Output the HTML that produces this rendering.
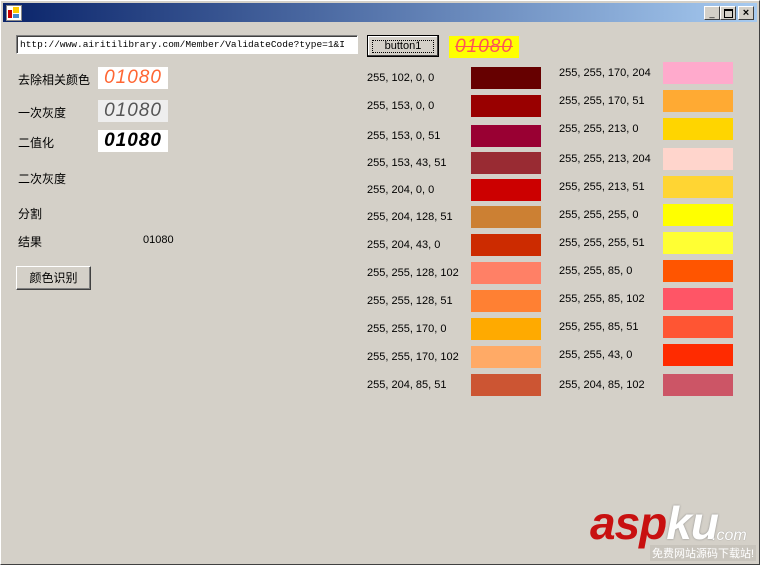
<!DOCTYPE html><html><head><meta charset="utf-8"><style>
body{margin:0;width:760px;height:565px;background:#d4d0c8;font-family:"Liberation Sans","Noto Sans CJK SC",sans-serif;font-size:11px;position:relative;overflow:hidden}
.a{position:absolute}
.t{position:absolute;font-size:11px;color:#000;white-space:nowrap}
.s{position:absolute;width:70px;height:22px}
.cap{font-family:"Liberation Sans",sans-serif;font-style:italic;font-size:19px;letter-spacing:1px}
</style></head><body>
<div class="a" style="left:0;top:0;width:758px;height:563px;border:1px solid #fff;border-right-color:#404040;border-bottom-color:#404040"></div>
<div class="a" style="left:3px;top:3px;width:754px;height:19px;background:linear-gradient(90deg,#0a246a,#a6caf0)"></div>
<div class="a" style="left:6px;top:5px;width:14px;height:14px;background:#fff;border:1px solid #888"><div class="a" style="left:1px;top:4px;width:4px;height:8px;background:#c00"></div><div class="a" style="left:6px;top:1px;width:6px;height:6px;background:#fc0"></div><div class="a" style="left:6px;top:8px;width:6px;height:4px;background:#48c"></div></div>
<div class="a" style="left:704px;top:6px;width:14px;height:12px;background:#d4d0c8;border:1px solid;border-color:#fff #404040 #404040 #fff;font-size:9px;text-align:center;line-height:12px">_</div>
<div class="a" style="left:720px;top:6px;width:14px;height:12px;background:#d4d0c8;border:1px solid;border-color:#fff #404040 #404040 #fff"><div class="a" style="left:3px;top:2px;width:7px;height:6px;border:1px solid #000;border-top-width:2px"></div></div>
<div class="a" style="left:738px;top:6px;width:14px;height:12px;background:#d4d0c8;border:1px solid;border-color:#fff #404040 #404040 #fff;font-size:11px;text-align:center;line-height:12px;font-weight:bold">×</div>
<div class="a" style="left:16px;top:35px;width:340px;height:17px;background:#fff;border:1px solid;border-color:#808080 #fff #fff #808080;box-shadow:inset 1px 1px 0 #404040;overflow:hidden"><span style="font-family:'Liberation Mono',monospace;font-size:9.5px;position:absolute;left:3px;top:3px;white-space:nowrap">http://www.airitilibrary.com/Member/ValidateCode?type=1&amp;I</span></div>
<div class="a" style="left:367px;top:35px;width:70px;height:20px;background:#d4d0c8;border:1px solid #000;box-shadow:inset -1px -1px 0 #404040,inset 1px 1px 0 #fff;text-align:center;line-height:20px;font-size:11px">button1<div class="a" style="left:4px;top:4px;width:60px;height:11px;border:1px dotted #000"></div></div>
<div class="a cap" style="left:449px;top:36px;width:70px;height:22px;background:#ff0;color:#f55;line-height:22px;text-decoration:line-through;text-align:center">01080</div>
<div class="t" style="left:18px;top:71px;font-size:12px">去除相关颜色</div>
<div class="a cap" style="left:98px;top:67px;width:70px;height:22px;background:#fff;color:#f63;line-height:22px;text-align:center">01080</div>
<div class="t" style="left:18px;top:104px;font-size:12px">一次灰度</div>
<div class="a cap" style="left:98px;top:100px;width:70px;height:22px;background:#eee;color:#555;line-height:22px;text-align:center">01080</div>
<div class="t" style="left:18px;top:134px;font-size:12px">二值化</div>
<div class="a cap" style="left:98px;top:130px;width:70px;height:22px;background:#fff;color:#000;line-height:22px;text-align:center;font-weight:bold">01080</div>
<div class="t" style="left:18px;top:170px;font-size:12px">二次灰度</div>
<div class="t" style="left:18px;top:205px;font-size:12px">分割</div>
<div class="t" style="left:18px;top:233px;font-size:12px">结果</div>
<div class="t" style="left:143px;top:234px">01080</div>
<div class="a" style="left:16px;top:266px;width:73px;height:22px;background:#d4d0c8;border:1px solid;border-color:#fff #404040 #404040 #fff;box-shadow:inset -1px -1px 0 #808080;text-align:center;line-height:22px;font-size:12px">颜色识别</div>

<div class="t" style="left:367px;top:72px">255, 102, 0, 0</div><div class="s" style="left:471px;top:67px;background:#660000"></div>
<div class="t" style="left:367px;top:100px">255, 153, 0, 0</div><div class="s" style="left:471px;top:95px;background:#990000"></div>
<div class="t" style="left:367px;top:130px">255, 153, 0, 51</div><div class="s" style="left:471px;top:125px;background:#990033"></div>
<div class="t" style="left:367px;top:157px">255, 153, 43, 51</div><div class="s" style="left:471px;top:152px;background:#992b33"></div>
<div class="t" style="left:367px;top:184px">255, 204, 0, 0</div><div class="s" style="left:471px;top:179px;background:#cc0000"></div>
<div class="t" style="left:367px;top:211px">255, 204, 128, 51</div><div class="s" style="left:471px;top:206px;background:#cc8033"></div>
<div class="t" style="left:367px;top:239px">255, 204, 43, 0</div><div class="s" style="left:471px;top:234px;background:#cc2b00"></div>
<div class="t" style="left:367px;top:267px">255, 255, 128, 102</div><div class="s" style="left:471px;top:262px;background:#ff8066"></div>
<div class="t" style="left:367px;top:295px">255, 255, 128, 51</div><div class="s" style="left:471px;top:290px;background:#ff8033"></div>
<div class="t" style="left:367px;top:323px">255, 255, 170, 0</div><div class="s" style="left:471px;top:318px;background:#ffaa00"></div>
<div class="t" style="left:367px;top:351px">255, 255, 170, 102</div><div class="s" style="left:471px;top:346px;background:#ffaa66"></div>
<div class="t" style="left:367px;top:379px">255, 204, 85, 51</div><div class="s" style="left:471px;top:374px;background:#cc5533"></div>

<div class="t" style="left:559px;top:67px">255, 255, 170, 204</div><div class="s" style="left:663px;top:62px;background:#ffaacc"></div>
<div class="t" style="left:559px;top:95px">255, 255, 170, 51</div><div class="s" style="left:663px;top:90px;background:#ffaa33"></div>
<div class="t" style="left:559px;top:123px">255, 255, 213, 0</div><div class="s" style="left:663px;top:118px;background:#ffd500"></div>
<div class="t" style="left:559px;top:153px">255, 255, 213, 204</div><div class="s" style="left:663px;top:148px;background:#ffd5cc"></div>
<div class="t" style="left:559px;top:181px">255, 255, 213, 51</div><div class="s" style="left:663px;top:176px;background:#ffd533"></div>
<div class="t" style="left:559px;top:209px">255, 255, 255, 0</div><div class="s" style="left:663px;top:204px;background:#ffff00"></div>
<div class="t" style="left:559px;top:237px">255, 255, 255, 51</div><div class="s" style="left:663px;top:232px;background:#ffff33"></div>
<div class="t" style="left:559px;top:265px">255, 255, 85, 0</div><div class="s" style="left:663px;top:260px;background:#ff5500"></div>
<div class="t" style="left:559px;top:293px">255, 255, 85, 102</div><div class="s" style="left:663px;top:288px;background:#ff5566"></div>
<div class="t" style="left:559px;top:321px">255, 255, 85, 51</div><div class="s" style="left:663px;top:316px;background:#ff5533"></div>
<div class="t" style="left:559px;top:349px">255, 255, 43, 0</div><div class="s" style="left:663px;top:344px;background:#ff2b00"></div>
<div class="t" style="left:559px;top:379px">255, 204, 85, 102</div><div class="s" style="left:663px;top:374px;background:#cc5566"></div>

<div class="a" style="left:590px;top:498px;font-family:'Liberation Sans',sans-serif;font-weight:bold;font-style:italic;font-size:46px;line-height:50px;letter-spacing:-1px"><span style="color:#c81010">asp</span><span style="color:#fff;text-shadow:0 0 2px #888">ku</span></div>
<div class="a" style="left:712px;top:527px;color:#fff;font-size:16px;font-style:italic;text-shadow:0 0 1px #888">.com</div>
<div class="a" style="left:650px;top:545px;color:#fff;font-size:11px;background:#c8c4bc;padding:0 2px;font-family:'Liberation Sans','Noto Sans CJK SC',sans-serif">免费网站源码下载站!</div>
</body></html>
